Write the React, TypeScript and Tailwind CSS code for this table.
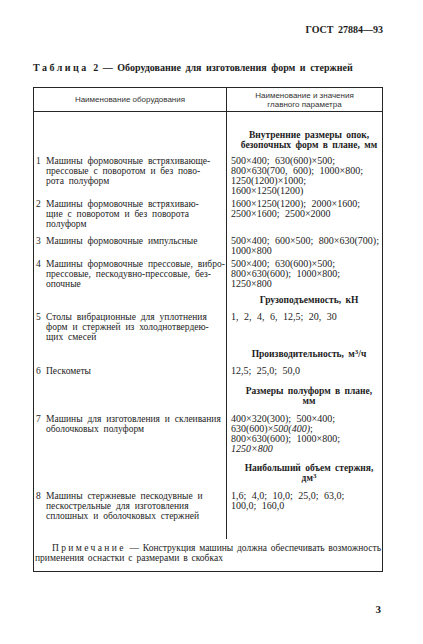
import React from 'react'

type RowProps = {
  pad: string
  num?: string
  left?: React.ReactNode[]
  right?: React.ReactNode[]
  heading?: boolean
}

function Row({ pad, num, left = [], right = [], heading = false }: RowProps) {
  return (
    <div className="grid grid-cols-[193px_1fr]">
      <div className={`border-r border-[#262626] pl-[2px] pr-[4px] text-[9.5px] [word-spacing:2.5px] ${pad}`}>
        {num && (
          <div className="flex">
            <div className="w-[10px] shrink-0">{num}</div>
            <div>
              {left.map((l, i) => (
                <div key={i} className="whitespace-nowrap">{l}</div>
              ))}
            </div>
          </div>
        )}
      </div>
      <div
        className={`${
          heading
            ? 'pl-[10px] pr-[1px] text-center font-bold text-[9.5px] [word-spacing:2px]'
            : 'pl-[4px] pr-[1px] text-[10px] [word-spacing:3px]'
        } ${pad}`}
      >
        {right.map((l, i) => (
          <div key={i} className="whitespace-nowrap">{l}</div>
        ))}
      </div>
    </div>
  )
}

export default function App() {
  return (
    <div className="w-[423px] h-[644px] bg-white text-[#1c1c1c] font-['Liberation_Serif','Times_New_Roman',serif] pl-[33px] pr-[40px] pt-[24px]">
      <div className="text-right font-bold text-[10px] leading-[12px] [word-spacing:2px]">ГОСТ 27884—93</div>

      <div className="mt-[26px] font-bold text-[10px] leading-[12px] [word-spacing:2px] whitespace-nowrap">
        <span className="tracking-[0.25em]">Таблица</span> 2 — Оборудование для изготовления форм и стержней
      </div>

      <div className="mt-[13px] border border-[#262626] leading-[10px]">
        <div className="grid grid-cols-[193px_1fr] h-[24px] border-b border-[#262626] font-['Liberation_Sans',Arial,sans-serif] text-[8px] text-[#333]">
          <div className="border-r border-[#262626] flex items-center justify-center">Наименование оборудования</div>
          <div className="flex flex-col items-center justify-center leading-[9px]">
            <div>Наименование и значения</div>
            <div>главного параметра</div>
          </div>
        </div>

        <Row pad="pt-[18px]" heading right={['Внутренние размеры опок,', 'безопочных форм в плане, мм']} />
        <Row
          pad="pt-[6px]"
          num="1"
          left={['Машины формовочные встряхивающе-', 'прессовые с поворотом и без пово-', 'рота полуформ']}
          right={['500×400; 630(600)×500;', '800×630(700, 600); 1000×800;', '1250(1200)×1000;', '1600×1250(1200)']}
        />
        <Row
          pad="pt-[3px]"
          num="2"
          left={['Машины формовочные встряхиваю-', 'щие с поворотом и без поворота', 'полуформ']}
          right={['1600×1250(1200); 2000×1600;', '2500×1600; 2500×2000']}
        />
        <Row
          pad="pt-[7px]"
          num="3"
          left={['Машины формовочные импульсные']}
          right={['500×400; 600×500; 800×630(700);', '1000×800']}
        />
        <Row
          pad="pt-[3px]"
          num="4"
          left={['Машины формовочные прессовые, вибро-', 'прессовые, пескодувно-прессовые, без-', 'опочные']}
          right={['500×400; 630(600)×500;', '800×630(600); 1000×800;', '1250×800']}
        />
        <Row pad="pt-[6px]" heading right={['Грузоподъемность, кН']} />
        <Row
          pad="pt-[7px]"
          num="5"
          left={['Столы вибрационные для уплотнения', 'форм и стержней из холоднотвердею-', 'щих смесей']}
          right={['1, 2, 4, 6, 12,5; 20, 30']}
        />
        <Row
          pad="pt-[7px]"
          heading
          right={[<span key="p">Производительность, м<sup className="text-[7px] leading-none">3</sup>/ч</span>]}
        />
        <Row pad="pt-[7px]" num="6" left={['Пескометы']} right={['12,5; 25,0; 50,0']} />
        <Row pad="pt-[10px]" heading right={['Размеры полуформ в плане,', 'мм']} />
        <Row
          pad="pt-[8px]"
          num="7"
          left={['Машины для изготовления и склеивания', 'оболочковых полуформ']}
          right={[
            '400×320(300); 500×400;',
            <span key="a">630(600)×<i>500(400)</i>;</span>,
            '800×630(600); 1000×800;',
            <i key="b">1250×800</i>,
          ]}
        />
        <Row
          pad="pt-[9px]"
          heading
          right={['Наибольший объем стержня,', <span key="d">дм<sup className="text-[7px] leading-none">3</sup></span>]}
        />
        <Row
          pad="pt-[8px] pb-[18px]"
          num="8"
          left={['Машины стержневые пескодувные и', 'пескострельные для изготовления', 'сплошных и оболочковых стержней']}
          right={['1,6; 4,0; 10,0; 25,0; 63,0;', '100,0; 160,0']}
        />

        <div className="pl-[1px] pr-[1px] pt-[4px] pb-[8px] text-[9.5px]">
          <div className="pl-[17px] text-justify [text-align-last:justify] whitespace-nowrap">
            <span className="tracking-[0.25em]">Примечание</span> — Конструкция машины должна обеспечивать возможность
          </div>
          <div className="[word-spacing:1.5px]">применения оснастки с размерами в скобках</div>
        </div>
      </div>

      <div className="mt-[31px] text-right font-bold text-[11px] leading-[12px] pr-[2px]">3</div>
    </div>
  )
}
